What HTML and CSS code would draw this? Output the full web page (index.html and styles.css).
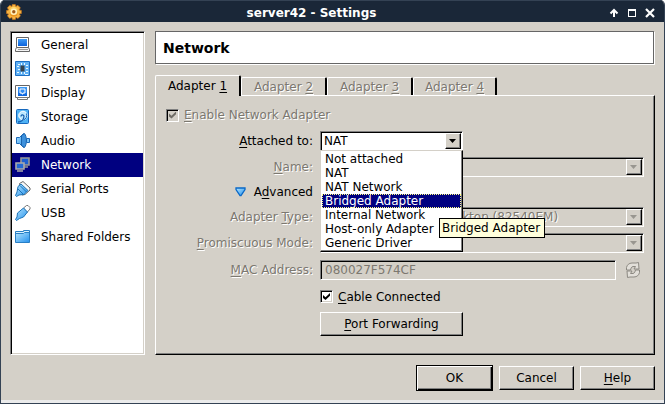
FILE: index.html
```html
<!DOCTYPE html>
<html lang="en">
<head>
<meta charset="utf-8">
<title>server42 - Settings</title>
<link rel="stylesheet" href="styles.css">
</head>
<body>
<svg width="0" height="0" class="defs" aria-hidden="true">
  <defs>
    <linearGradient id="blue" x1="0" y1="0" x2="0" y2="1"><stop offset="0" stop-color="#3f9cf5"/><stop offset="1" stop-color="#0b62dc"/></linearGradient>
    <linearGradient id="sky" x1="0" y1="0" x2="1" y2="1"><stop offset="0" stop-color="#b4e6ff"/><stop offset="1" stop-color="#2490ec"/></linearGradient>
    <linearGradient id="gold" x1="0" y1="0" x2="0" y2="1"><stop offset="0" stop-color="#ffdf72"/><stop offset="1" stop-color="#e88a12"/></linearGradient>
  </defs>
</svg>
<div class="window">
  <header class="titlebar">
    <svg class="gear" viewBox="0 0 16 16" width="16" height="16" aria-hidden="true">
      <path fill="#f7b443" stroke="#c4741a" stroke-width=".7" d="M6.300 .5h3l.5 2 2-1.200 2.500 2.500L13.200 6l2.200.5v3l-2.200.5 1.200 2-2.500 2.400-2-1.200-.5 2.200h-3l-.5-2.200-2.100 1.200-2.400-2.400L2.600 10l-2.100-.5v-3L2.600 6 1.400 3.800l2.400-2.500 2.100 1.200z"/>
      <circle cx="7.800" cy="7.800" r="4.800" fill="url(#gold)"/>
      <circle cx="7.800" cy="7.800" r="3.300" fill="#fff1bd"/>
      <circle cx="7.800" cy="7.800" r="1.700" fill="#a35b18"/>
    </svg>
    <h1 class="title">server42 - Settings</h1>
    <div class="controls">
      <button class="control" aria-label="Shade"><svg viewBox="0 0 10 10" width="10" height="10"><path d="M5 9V2M1.500 5.500 5 2l3.500 3.500" fill="none" stroke="#fff" stroke-width="2"/></svg></button>
      <button class="control" aria-label="Maximize"><svg viewBox="0 0 10 10" width="10" height="10"><path d="M1 1h8v8H1zM2 3v5h6V3z" fill="#fff" fill-rule="evenodd"/></svg></button>
      <button class="control" aria-label="Close"><svg viewBox="0 0 10 10" width="10" height="10"><path d="m1 1 8 8M9 1 1 9" fill="none" stroke="#fff" stroke-width="2.200"/></svg></button>
    </div>
  </header>

  <div class="content">
    <nav class="sidebar">
      <a class="item" href="#general"><svg viewBox="0 0 16 16" width="16" height="16"><path d="M1.500 .5h12v10h-12z" fill="#fff" stroke="#666"/><path d="M3 2h9v7H3z" fill="url(#blue)"/><path d="M1.500 10.500h12l1 2v2H.5v-2z" fill="#f4f4f4" stroke="#666"/><path d="M3 12.500h10" stroke="#999"/></svg>General</a>
      <a class="item" href="#system"><svg viewBox="0 0 16 16" width="16" height="16"><path d="M.5 .5h14v14H.5z" fill="#5fb0f4" stroke="#1c6fc4"/><path d="M3 3.500h2M2 5.500h2M3 8.500h2M2 11.500h2M11 4.500h2M11 7.500h2M11 10.500h2M10 13.500h3M6.500 2v2M9.500 2v2M6.500 11v2M9.500 11v2" stroke="#e8f8ff"/><path d="M5.500 4.500h4v6h-4z" fill="#34424e"/></svg>System</a>
      <a class="item" href="#display"><svg viewBox="0 0 16 16" width="16" height="16"><path d="M.5 .5h14v12H.5z" fill="#fff" stroke="#666"/><path d="M3 2h9v9H3z" fill="url(#blue)"/><path d="M5 4h5v4H8v1H7V8H5z" fill="#2f8af0" stroke="#fff"/><path d="M2.500 12.500h10v2h-10z" fill="#fff" stroke="#777"/></svg>Display</a>
      <a class="item" href="#storage"><svg viewBox="0 0 16 16" width="16" height="16"><rect x="1.500" y=".5" width="12" height="14" rx="1" fill="#4eb2f5" stroke="#1668bd"/><circle cx="8" cy="6.500" r="4.300" fill="#bce8ff" stroke="#fff"/><path d="M3 13c3 0 6-2 6-6-1-2-3-1-3 .5" fill="none" stroke="#155fae" stroke-width="1.300"/><path d="M11.500 4.500c1 3-.5 5.500-3 6.500" fill="none" stroke="#1668bd"/></svg>Storage</a>
      <a class="item" href="#audio"><svg viewBox="0 0 16 16" width="16" height="16"><path d="M1.500 4.500h3l4-4v14l-4-4h-3z" fill="url(#sky)" stroke="#1b69b8"/><path d="M6.500 2.500l3-2c2.500 3 2.500 11 0 14l-3-2z" fill="#3d91dd" stroke="#1b64ad"/><path d="M11.500 5.500h3v4h-3z" fill="#7cc4f5" stroke="#1b69b8"/></svg>Audio</a>
      <a class="item selected" href="#network" aria-current="page"><svg viewBox="0 0 16 16" width="16" height="16"><path d="M6 1h8v7H6z" fill="#1f5fd0" stroke="#999" stroke-width="1.600"/><path d="M8 10h5" stroke="#999" stroke-width="1.500"/><path d="M1 6h8v6H1z" fill="#2468d6" stroke="#aaa" stroke-width="1.600"/><path d="M2 14h6" stroke="#aaa" stroke-width="1.500"/></svg>Network</a>
      <a class="item" href="#serial"><svg viewBox="0 0 16 16" width="16" height="16"><path d="m4.500 2.500 3.500-2 7 6.500v2l-5 4.500-3 .5z" fill="#f8f8f8" stroke="#666"/><path d="m3 5.500 3-2.500 7 6.500-4 4-5 .5-2.500 1.500-1-1L2 11z" fill="url(#sky)" stroke="#1b72b7"/><path d="m5 4.500 6.500 6.500M3 8l5 5" stroke="#1b72b7"/></svg>Serial Ports</a>
      <a class="item" href="#usb"><svg viewBox="0 0 16 16" width="16" height="16"><path d="m8.500 3 3-2.500H13l2 2V4l-3 3.500z" fill="#fff" stroke="#777"/><path d="m8.500 3 4 4-4 5-4 1.500L1.500 15.500l-1-1L2 12l.5-4z" fill="url(#sky)" stroke="#1b72b7"/></svg>USB</a>
      <a class="item" href="#folders"><svg viewBox="0 0 16 16" width="16" height="16"><path d="M.5 2.500h8v-1h6v11H.5z" fill="#d7f1ff" stroke="#287fc5"/><path d="M.5 4.500h8l1-1h5v10H.5z" fill="url(#sky)" stroke="#287fc5"/></svg>Shared Folders</a>
    </nav>

    <main class="main">
      <h2 class="heading">Network</h2>
      <div class="tabs" role="tablist">
        <button class="tab active" role="tab" aria-selected="true">Adapter <u>1</u></button>
        <button class="tab" role="tab" disabled>Adapter <u>2</u></button>
        <button class="tab" role="tab" disabled>Adapter <u>3</u></button>
        <button class="tab last" role="tab" disabled>Adapter <u>4</u></button>
      </div>
      <form class="panel" id="adapter">
        <div class="check wide">
          <input type="checkbox" id="enable" checked disabled>
          <label class="off" for="enable"><u>E</u>nable Network Adapter</label>
        </div>

        <label class="label" for="attached"><u>A</u>ttached to:</label>
        <div class="combo short">
          <select id="attached"><option>NAT</option></select>
          <span class="drop"></span>
          <ul class="menu" role="listbox" aria-label="Attached to">
            <li role="option">Not attached</li>
            <li role="option">NAT</li>
            <li role="option">NAT Network</li>
            <li role="option" class="current" aria-selected="true">Bridged Adapter</li>
            <li role="option">Internal Network</li>
            <li role="option">Host-only Adapter</li>
            <li role="option">Generic Driver</li>
          </ul>
          <div class="tooltip" role="tooltip">Bridged Adapter</div>
        </div>

        <label class="label off" for="name"><u>N</u>ame:</label>
        <div class="combo"><select id="name" disabled><option></option></select><span class="drop"></span></div>

        <button class="advanced" type="button"><svg viewBox="0 0 11 10" width="11" height="10" aria-hidden="true"><path d="M1 1h9v1.500L6 8.500H5L1 2.500z" fill="url(#sky)" stroke="#0968c8" stroke-width="1.300"/></svg><span>A<u>d</u>vanced</span></button>

        <label class="label off" for="type">Adapter <u>T</u>ype:</label>
        <div class="combo"><select id="type" disabled><option>Intel PRO/1000 MT Desktop (82540EM)</option></select><span class="drop"></span></div>

        <label class="label off" for="promiscuous"><u>P</u>romiscuous Mode:</label>
        <div class="combo"><select id="promiscuous" disabled><option></option></select><span class="drop"></span></div>

        <label class="label off" for="mac"><u>M</u>AC Address:</label>
        <div class="mac">
          <input class="field" id="mac" type="text" value="080027F574CF" disabled>
          <button class="refresh" type="button" aria-label="Generate new MAC address" disabled><svg viewBox="0 0 16 16" width="16" height="16"><g fill="#e2dfd9" stroke="#8c8982"><path d="M1.500 8V5.500C2 3 4 1 7 1h4l2.500-.5L14 7H9l1.500-2.500H8C6 5 6 6.500 5.500 8z"/><path d="M14.500 8v2.500C14 13 12 15 9 15H5l-2.500.5L2 9h5l-1.500 2.500H8c2-.5 2-2 2.500-3.500z"/></g></svg></button>
        </div>

        <div class="check second">
          <input type="checkbox" id="cable" checked>
          <label for="cable"><u>C</u>able Connected</label>
        </div>
        <button class="button short second" type="button"><u>P</u>ort Forwarding</button>
      </form>
    </main>
  </div>

  <footer class="actions">
    <button class="button default">OK</button>
    <button class="button">Cancel</button>
    <button class="button"><u>H</u>elp</button>
  </footer>
</div>
</body>
</html>
```
FILE: styles.css
```css
* { box-sizing: border-box; }

body {
  margin: 0;
  background: #fff;
  color: #000;
  font: 12px/14px "DejaVu Sans", sans-serif;
}

button, input, select { font: inherit; color: inherit; }
button { margin: 0; padding: 0; border: 0; background: none; }
svg { display: block; flex: none; }
u { text-underline-offset: 2px; text-decoration-thickness: 1px; text-decoration-skip-ink: none; }
.defs { position: absolute; }

.window {
  display: flex;
  flex-direction: column;
  min-height: 100vh;
  border: 1px solid #344254;
  border-top: 0;
  border-radius: 5px 5px 0 0;
  background: #d4d0c8;
  overflow: hidden;
}

.titlebar {
  display: flex;
  align-items: center;
  height: 22px;
  padding: 0 9px 0 5px;
  border-top: 1px solid #344254;
  background: #1a2738;
  color: #fff;
}
.title { flex: 1; margin: 0; padding-top: 3px; font-size: 12px; line-height: 16px; text-align: center; }
.controls { display: flex; gap: 8px; padding: 2px 0 0 8px; }

.content {
  display: flex;
  flex: 1;
  gap: 10px;
  padding: 9px 9px 10px;
}

.sidebar {
  width: 135px;
  border: 1px solid;
  border-color: #808080 #fff #fff #808080;
  background: #fff;
  box-shadow: inset 1px 1px #000, inset -1px -1px #d4d0c8;
  padding: 1px;
}
.item {
  display: flex;
  align-items: center;
  gap: 10px;
  height: 24px;
  padding-left: 3px;
  color: #000;
  text-decoration: none;
}
.item.selected { background: #000080; color: #fff; }

.main { display: flex; flex: 1; flex-direction: column; min-width: 0; }
.heading {
  margin: 0 1px 11px 0;
  padding: 8px 7px 6px;
  border: 1px solid #666;
  background: #fff;
  box-shadow: 1px 1px #fff;
  font-size: 14px;
  line-height: 17px;
}

.tabs { display: flex; align-items: flex-end; }
.tab {
  width: 86px;
  height: 18px;
  border-top: 1px solid #fff;
  border-left: 1px solid #fff;
  border-right: 2px solid #000;
  border-radius: 2px 2px 0 0;
}
.tab.last { width: 84px; }
.tab.active {
  height: 21px;
  margin-bottom: -1px;
  z-index: 1;
  background: #d4d0c8;
}
.tab:disabled, .off, select:disabled {
  color: #7c7870;
  opacity: 1;
  text-shadow: 1px 1px #fff;
}

.panel {
  display: grid;
  grid-template-columns: 147px 1fr;
  grid-template-rows: 20px 20px 20px 18px 20px 20px 22px 19px 24px;
  align-content: start;
  align-items: center;
  gap: 6px 7px;
  flex: 1;
  padding: 9px 10px 17px;
  border: 1px solid;
  border-color: #fff #000 #000 #fff;
  box-shadow: inset -1px -1px #808080;
}
.wide { grid-column: 1 / -1; }
.second { grid-column: 2; }
.short { width: 143px; }
.label, .advanced { grid-column: 1; }
.label { text-align: right; }

.check { display: flex; align-items: center; gap: 5px; }
.check input {
  appearance: none;
  width: 13px;
  height: 13px;
  margin: 0;
  border: 1px solid;
  border-color: #808080 #fff #fff #808080;
  background: #fff;
  box-shadow: inset 1px 1px #000, inset -1px -1px #d4d0c8;
}
.check input:checked::before {
  content: "";
  display: block;
  width: 7px;
  height: 7px;
  margin: 2px;
  background: #000;
  clip-path: polygon(0 29%, 36% 62%, 100% 0, 100% 40%, 36% 100%, 0 72%);
}
.check input:disabled { background: #d4d0c8; }
.check input:disabled::before { background: #6f6c66; }

.combo { position: relative; }
.combo select, .field {
  display: block;
  appearance: none;
  width: 100%;
  height: 20px;
  margin: 0;
  padding: 0 3px;
  border: 1px solid;
  border-color: #808080 #fff #fff #808080;
  border-radius: 0;
  background: #fff;
  box-shadow: inset 1px 1px #000;
}
.combo select:disabled, .field:disabled { background: #d4d0c8; }
.field:disabled { color: #7c7870; padding: 0 4px; }
.drop {
  position: absolute;
  top: 2px;
  right: 2px;
  width: 16px;
  height: 16px;
  border: 1px solid;
  border-color: #fff #000 #000 #fff;
  background: #d4d0c8;
  box-shadow: inset -1px -1px #808080;
  pointer-events: none;
}
.drop::before {
  content: "";
  display: block;
  width: 7px;
  height: 4px;
  margin: 5px 3px;
  background: #000;
  clip-path: polygon(0 0, 100% 0, 50% 100%);
}
select:disabled + .drop::before { background: #999690; }

.menu {
  position: absolute;
  top: 19px;
  left: 0;
  z-index: 2;
  width: 100%;
  margin: 0;
  padding: 1px;
  border: 1px solid;
  border-color: #d4d0c8 #000 #000 #d4d0c8;
  background: #fff;
  box-shadow: inset -1px -1px #808080;
  list-style: none;
}
.menu li { height: 14px; padding-left: 3px; white-space: nowrap; }
.menu .current { background: #000080; color: #fff; outline: 1px dotted #ffff80; outline-offset: -1px; }
.tooltip {
  position: absolute;
  top: 87px;
  left: 119px;
  z-index: 3;
  padding: 2px 4px 2px 2px;
  border: 1px solid #000;
  background: #ffffdc;
  white-space: nowrap;
}

.advanced { display: flex; align-items: center; gap: 8px; justify-self: end; }
.mac { display: flex; align-items: center; gap: 6px; }
.mac .field { flex: 1; min-width: 0; }
.refresh { display: grid; place-items: center; width: 22px; height: 20px; }

.button {
  height: 24px;
  border: 1px solid;
  border-color: #fff #000 #000 #fff;
  background: #d4d0c8;
  box-shadow: inset -1px -1px #808080;
}
.actions {
  display: flex;
  justify-content: flex-end;
  align-items: center;
  gap: 6px;
  padding: 0 9px 9px;
  border-bottom: 3px solid #ebebeb;
}
.actions .button { width: 75px; }
.actions .default {
  width: 77px;
  height: 26px;
  border-color: #000;
  box-shadow: inset 1px 1px #fff, inset -1px -1px #000, inset -2px -2px #808080;
}
```
